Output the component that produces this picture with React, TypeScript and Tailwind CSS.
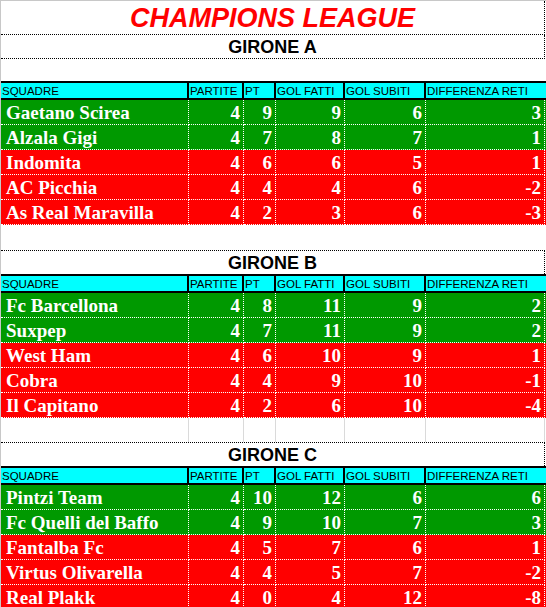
type Riga = [string, number, number, number, number, number, boolean];

const GIRONI: { nome: string; righe: Riga[] }[] = [
  {
    nome: 'GIRONE A',
    righe: [
      ['Gaetano Scirea', 4, 9, 9, 6, 3, true],
      ['Alzala Gigi', 4, 7, 8, 7, 1, true],
      ['Indomita', 4, 6, 6, 5, 1, false],
      ['AC Picchia', 4, 4, 4, 6, -2, false],
      ['As Real Maravilla', 4, 2, 3, 6, -3, false],
    ],
  },
  {
    nome: 'GIRONE B',
    righe: [
      ['Fc Barcellona', 4, 8, 11, 9, 2, true],
      ['Suxpep', 4, 7, 11, 9, 2, true],
      ['West Ham', 4, 6, 10, 9, 1, false],
      ['Cobra', 4, 4, 9, 10, -1, false],
      ['Il Capitano', 4, 2, 6, 10, -4, false],
    ],
  },
  {
    nome: 'GIRONE C',
    righe: [
      ['Pintzi Team', 4, 10, 12, 6, 6, true],
      ['Fc Quelli del Baffo', 4, 9, 10, 7, 3, true],
      ['Fantalba Fc', 4, 5, 7, 6, 1, false],
      ['Virtus Olivarella', 4, 4, 5, 7, -2, false],
      ['Real Plakk', 4, 0, 4, 12, -8, false],
    ],
  },
];

const COLS = 'grid grid-cols-[188px_55px_32px_69px_81px_119px]';
const HEAD = ['SQUADRE', 'PARTITE', 'PT', 'GOL FATTI', 'GOL SUBITI', 'DIFFERENZA RETI'];
const CELLA = "h-[25px] pt-px border-r border-b border-dotted border-white text-white font-bold text-[19px] leading-[24px] whitespace-nowrap font-['Liberation_Serif',serif]";

function Tabella({ righe }: { righe: Riga[] }) {
  return (
    <div>
      {/* intestazione */}
      <div className={`${COLS} bg-[#00ffff] border-t-2 border-b-2 border-black`}>
        {HEAD.map((h, i) => (
          <div key={h}
            className={`h-[15px] pl-[1px] text-[11.5px] leading-[16px] text-black whitespace-nowrap overflow-hidden ${i < 5 ? 'border-r-2 border-black' : ''}`}>
            {h}
          </div>
        ))}
      </div>
      {righe.map(r => (
        <div key={r[0]} className={`${COLS} ${r[6] ? 'bg-[#009900]' : 'bg-[#ff0000]'}`}>
          <div className={`${CELLA} pl-[5px]`}>{r[0]}</div>
          {r.slice(1, 6).map((v, i) => (
            <div key={i} className={`${CELLA} pr-[3px] text-right`}>{v}</div>
          ))}
        </div>
      ))}
    </div>
  );
}

function Vuota({ griglia }: { griglia?: boolean }) {
  if (!griglia) return <div className="h-[25px]" />;
  return (
    <div className={`${COLS} h-[24px]`}>
      {HEAD.map(h => <div key={h} className="border-r border-[#dadada]" />)}
    </div>
  );
}

export default function App() {
  return (
    <div className="w-[546px] h-[607px] overflow-hidden bg-white border-t border-l border-[#c8c8c8] font-['Liberation_Sans',Arial,sans-serif]">
      <div className="w-[544px] h-[34px] flex items-center justify-center border-b border-r border-dotted border-black">
        <span className="text-[27px] font-bold italic text-[#ff0000] pt-[2px] leading-none">CHAMPIONS LEAGUE</span>
      </div>

      {GIRONI.map((g, i) => (
        <div key={g.nome}>
          {i === 1 && <Vuota />}
          {i === 2 && <Vuota griglia />}
          <div className={`w-[544px] h-[24px] flex items-center justify-center border-r border-dotted border-black ${i === 0 ? 'border-b' : 'border-t'}`}>
            <span className="text-[18px] font-bold text-black leading-none">{g.nome}</span>
          </div>
          {i === 0 && <div className="h-[22px]" />}
          <Tabella righe={g.righe} />
        </div>
      ))}
    </div>
  );
}
